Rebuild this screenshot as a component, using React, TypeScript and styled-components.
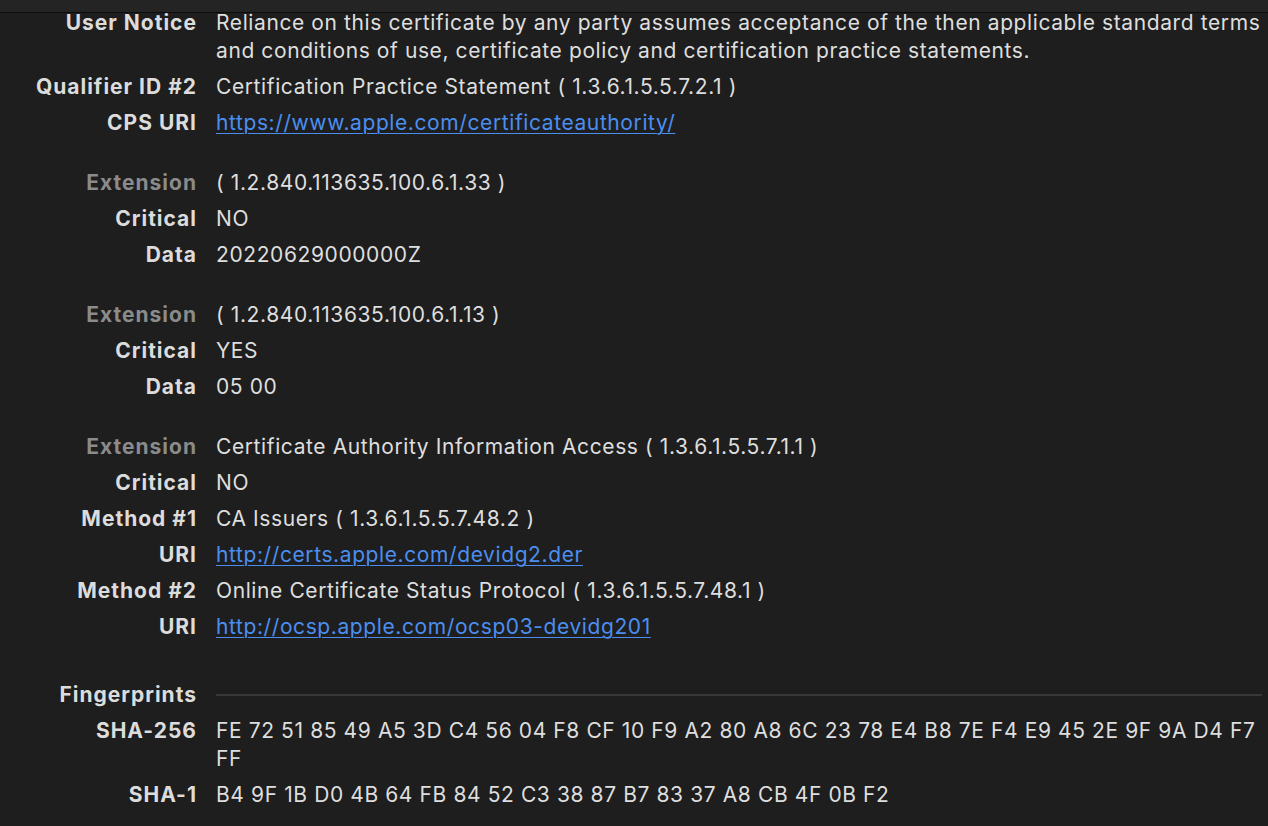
import React from "react";
import styled, { createGlobalStyle } from "styled-components";

const GlobalStyle = createGlobalStyle`
  html, body {
    margin: 0;
    padding: 0;
    background: #1e1e1e;
  }
  body {
    font-family: Inter, "Noto Sans", "Liberation Sans", sans-serif;
    -webkit-font-smoothing: antialiased;
  }
`;

const Window = styled.div`
  position: relative;
  width: 1268px;
  height: 826px;
  background: #1e1e1e;
  overflow: hidden;
`;

/* toolbar material that sits over the scrolled content */
const HeaderStrip = styled.div`
  position: absolute;
  top: 0;
  left: 0;
  right: 0;
  height: 12px;
  background: #242424;
  border-bottom: 1px solid #0c0c0c;
  z-index: 1;
`;

const Content = styled.div`
  padding-top: 9px;
  display: flex;
  flex-direction: column;
`;

const Group = styled.div<{ $gap?: number }>`
  display: flex;
  flex-direction: column;
  gap: 8px;
  margin-bottom: ${(p) => p.$gap ?? 32}px;
`;

const Row = styled.div`
  display: grid;
  grid-template-columns: 196px 1fr;
  column-gap: 20px;
  align-items: start;
  font-size: 21px;
  line-height: 28px;
`;

const Label = styled.div<{ $dim?: boolean }>`
  text-align: right;
  font-weight: 700;
  letter-spacing: 1px;
  margin-right: -1px;
  color: ${(p) => (p.$dim ? "#8b8b8b" : "#dcdcdc")};
  white-space: nowrap;
`;

const Value = styled.div`
  color: #dedede;
  letter-spacing: 0.6px;
  padding-right: 2px;
`;

const Link = styled.a`
  color: #4b8ef0;
  text-decoration: underline;
  text-underline-offset: 3px;
  text-decoration-thickness: 1px;
`;

const SectionRule = styled.div`
  align-self: center;
  height: 2px;
  background: #383838;
  margin-right: 6px;
`;

type Field = { label: string; value: React.ReactNode; dim?: boolean };

const groups: { fields: Field[]; gap?: number }[] = [
  {
    fields: [
      {
        label: "User Notice",
        value:
          "Reliance on this certificate by any party assumes acceptance of the then applicable standard terms and conditions of use, certificate policy and certification practice statements.",
      },
      { label: "Qualifier ID #2", value: "Certification Practice Statement ( 1.3.6.1.5.5.7.2.1 )" },
      {
        label: "CPS URI",
        value: <Link href="#">https://www.apple.com/certificateauthority/</Link>,
      },
    ],
  },
  {
    fields: [
      { label: "Extension", value: "( 1.2.840.113635.100.6.1.33 )", dim: true },
      { label: "Critical", value: "NO" },
      { label: "Data", value: "20220629000000Z" },
    ],
  },
  {
    fields: [
      { label: "Extension", value: "( 1.2.840.113635.100.6.1.13 )", dim: true },
      { label: "Critical", value: "YES" },
      { label: "Data", value: "05 00" },
    ],
  },
  {
    gap: 40,
    fields: [
      {
        label: "Extension",
        value: "Certificate Authority Information Access ( 1.3.6.1.5.5.7.1.1 )",
        dim: true,
      },
      { label: "Critical", value: "NO" },
      { label: "Method #1", value: "CA Issuers ( 1.3.6.1.5.5.7.48.2 )" },
      { label: "URI", value: <Link href="#">http://certs.apple.com/devidg2.der</Link> },
      { label: "Method #2", value: "Online Certificate Status Protocol ( 1.3.6.1.5.5.7.48.1 )" },
      { label: "URI", value: <Link href="#">http://ocsp.apple.com/ocsp03-devidg201</Link> },
    ],
  },
];

const fingerprints: Field[] = [
  {
    label: "SHA-256",
    value:
      "FE 72 51 85 49 A5 3D C4 56 04 F8 CF 10 F9 A2 80 A8 6C 23 78 E4 B8 7E F4 E9 45 2E 9F 9A D4 F7 FF",
  },
  { label: "SHA-1", value: "B4 9F 1B D0 4B 64 FB 84 52 C3 38 87 B7 83 37 A8 CB 4F 0B F2" },
];

export default function App() {
  return (
    <Window>
      <GlobalStyle />
      <HeaderStrip />
      <Content>
        {groups.map((g, gi) => (
          <Group key={gi} $gap={g.gap}>
            {g.fields.map((f, fi) => (
              <Row key={fi}>
                <Label $dim={f.dim}>{f.label}</Label>
                <Value>{f.value}</Value>
              </Row>
            ))}
          </Group>
        ))}
        <Group>
          <Row>
            <Label>Fingerprints</Label>
            <SectionRule />
          </Row>
          {fingerprints.map((f, fi) => (
            <Row key={fi}>
              <Label>{f.label}</Label>
              <Value>{f.value}</Value>
            </Row>
          ))}
        </Group>
      </Content>
    </Window>
  );
}
